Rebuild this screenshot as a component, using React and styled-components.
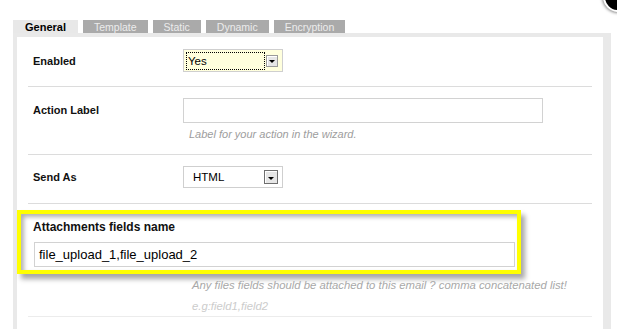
import React from 'react';
import styled, { createGlobalStyle } from 'styled-components';

const GlobalStyle = createGlobalStyle`
  html, body {
    margin: 0;
    background: #fff;
    overflow: hidden;
  }
  body {
    font-family: Arial, "Liberation Sans", sans-serif;
    color: #000;
  }
`;

const Page = styled.div`
  position: relative;
  padding: 20px 0 0 13px;
  height: 329px;
  box-sizing: border-box;
`;

const CloseButton = styled.div`
  position: absolute;
  top: -18px;
  left: 603px;
  width: 26px;
  height: 26px;
  border-radius: 50%;
  background: #000;
  border: 2px solid #fff;
  box-shadow: 0 0 3px 1px rgba(0, 0, 0, 0.45);
`;

const TabBar = styled.div`
  display: flex;
  align-items: flex-end;
  gap: 5px;
  height: 13px;
`;

const Tab = styled.div`
  height: 13px;
  padding: 0 ${p => (p.$active ? 12 : 11)}px;
  display: flex;
  align-items: center;
  font-size: ${p => (p.$active ? 11 : 10.5)}px;
  font-weight: ${p => (p.$active ? 'bold' : 'normal')};
  background: ${p => (p.$active ? '#e8e8e8' : '#aaaaaa')};
  color: ${p => (p.$active ? '#000' : '#ececec')};
  white-space: nowrap;
`;

const Panel = styled.div`
  width: 598px;
  box-sizing: border-box;
  border: 4px solid #e9e9e9;
  border-right-width: 8px;
  border-bottom: none;
  padding: 0 11px 30px;
`;

const Row = styled.div`
  display: grid;
  grid-template-columns: 150px 1fr;
  align-items: ${p => p.$align || 'center'};
  padding: ${p => p.$pad};
  padding-left: 5px;
  border-bottom: 1px solid #dcdcdc;
`;

const Label = styled.div`
  font-size: 11px;
  font-weight: bold;
  color: #111;
`;

const Field = styled.div`
  display: flex;
  flex-direction: column;
`;

const Select = styled.div`
  width: 100px;
  height: ${p => p.$h}px;
  box-sizing: border-box;
  border: 1px solid #cfcfcf;
  background: ${p => (p.$focused ? '#ffffdd' : '#fff')};
  display: flex;
  align-items: center;
  padding: 0 4px 0 2px;
  gap: 1px;
`;

const SelectValue = styled.div`
  flex: 1;
  height: 18px;
  box-sizing: border-box;
  display: flex;
  align-items: center;
  padding-left: ${p => (p.$focused ? '1px' : '6px')};
  border: 1px ${p => (p.$focused ? 'dotted #000' : 'solid transparent')};
  font-size: 11.5px;
  color: #000;
`;

const ArrowButton = styled.div`
  width: ${p => p.$size}px;
  height: ${p => p.$size}px;
  box-sizing: border-box;
  border: 1px solid ${p => (p.$dark ? '#6e6e6e' : '#9a9a9a')};
  box-shadow: inset 1px 1px 0 #fff;
  background: #e6e6e6;
  display: flex;
  align-items: center;
  justify-content: center;
  &::after {
    content: '';
    margin-top: 2px;
    border-left: 3px solid transparent;
    border-right: 3px solid transparent;
    border-top: 3px solid #000;
  }
`;

const TextInput = styled.div`
  width: ${p => p.$w};
  height: 25px;
  box-sizing: border-box;
  border: 1px solid #d2d2d2;
  background: #fff;
  display: flex;
  align-items: center;
  padding-left: 4px;
  font-size: 13px;
  color: #000;
`;

const Hint = styled.div`
  font-size: ${p => p.$fs || 11}px;
  font-style: italic;
  color: ${p => p.$color || '#9d9d9d'};
  line-height: ${p => p.$lh || 14}px;
  padding-left: ${p => p.$indent || 0}px;
  margin-top: ${p => p.$mt || 0}px;
`;

const HighlightRow = styled.div`
  border-bottom: 1px solid #ececec;
  padding-top: 6px;
`;

const Callout = styled.div`
  width: 504px;
  margin-left: -11px;
  box-sizing: border-box;
  border: 4px solid #ffff00;
  background: #fff;
  padding: 6px 2px 3px 13px;
  display: flex;
  flex-direction: column;
  gap: 8px;
  box-shadow: 4px 5px 5px rgba(0, 0, 0, 0.35), inset 3px 3px 4px rgba(0, 0, 0, 0.3);
`;

const CalloutLabel = styled.div`
  font-size: 12px;
  font-weight: bold;
  line-height: 14px;
  margin-left: -1px;
  color: #111;
`;

const tabs = ['General', 'Template', 'Static', 'Dynamic', 'Encryption'];

export default function App() {
  return (
    <>
      <GlobalStyle />
      <Page>
        <CloseButton />
        <TabBar>
          {tabs.map((t, i) => (
            <Tab key={t} $active={i === 0}>{t}</Tab>
          ))}
        </TabBar>
        <Panel>
          <Row $pad="12px 0 14px">
            <Label>Enabled</Label>
            <Select $h={23} $focused>
              <SelectValue $focused>Yes</SelectValue>
              <ArrowButton $size={12} />
            </Select>
          </Row>
          <Row $align="start" $pad="11px 0 13px">
            <Label style={{ lineHeight: '25px' }}>Action Label</Label>
            <Field>
              <TextInput $w="360px" />
              <Hint $indent={6} $mt={4}>Label for your action in the wizard.</Hint>
            </Field>
          </Row>
          <Row $pad="11px 0 15px">
            <Label>Send As</Label>
            <Select $h={22}>
              <SelectValue>HTML</SelectValue>
              <ArrowButton $size={14} $dark />
            </Select>
          </Row>
          <HighlightRow>
            <Callout>
              <CalloutLabel>Attachments fields name</CalloutLabel>
              <TextInput $w="481px">file_upload_1,file_upload_2</TextInput>
            </Callout>
            <Hint $indent={164} $lh={22} $fs={11.3} $color="#a8a8a8">
              Any files fields should be attached to this email ? comma concatenated list!
            </Hint>
            <Hint $indent={164} $lh={20} $fs={11.3} $color="#cccccc">e.g:field1,field2</Hint>
          </HighlightRow>
        </Panel>
      </Page>
    </>
  );
}
